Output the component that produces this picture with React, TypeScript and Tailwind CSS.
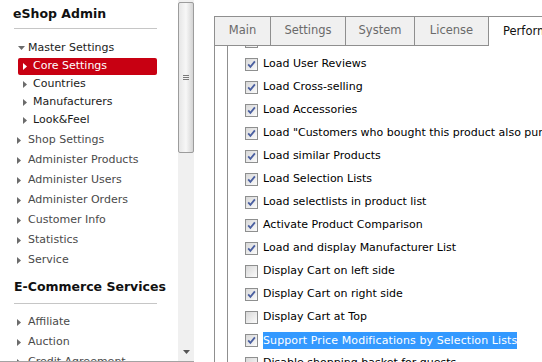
import React from 'react'

const font = { fontFamily: '"DejaVu Sans", Verdana, sans-serif' }

function Arrow({ color = '#6b6b6b' }: { color?: string }) {
  return (
    <svg width="4" height="7" viewBox="0 0 4 7" className="shrink-0">
      <path d="M0 0 L4 3.5 L0 7 Z" fill={color} />
    </svg>
  )
}

function Check({ checked }: { checked: boolean }) {
  return (
    <svg width="13" height="13" viewBox="0 0 13 13" className="shrink-0">
      <defs>
        <linearGradient id="cbg" x1="0" y1="0" x2="1" y2="1">
          <stop offset="0" stopColor="#d6d6d6" />
          <stop offset="1" stopColor="#fdfdfd" />
        </linearGradient>
      </defs>
      <rect x="0.5" y="0.5" width="12" height="12" fill="url(#cbg)" stroke="#8e8f8f" />
      {checked && (
        <path d="M3.2 6.3 L5.4 8.8 L9.9 3.4" fill="none" stroke="#4a5fa0" strokeWidth="1.8" />
      )}
    </svg>
  )
}

const topItems = [
  'Shop Settings',
  'Administer Products',
  'Administer Users',
  'Administer Orders',
  'Customer Info',
  'Statistics',
  'Service',
]

const options: [string, boolean][] = [
  ['Load Product Reviews', true],
  ['Load User Reviews', true],
  ['Load Cross-selling', true],
  ['Load Accessories', true],
  ['Load "Customers who bought this product also purchased"', true],
  ['Load similar Products', true],
  ['Load Selection Lists', true],
  ['Load selectlists in product list', true],
  ['Activate Product Comparison', true],
  ['Load and display Manufacturer List', true],
  ['Display Cart on left side', false],
  ['Display Cart on right side', true],
  ['Display Cart at Top', false],
  ['Support Price Modifications by Selection Lists', true],
  ['Disable shopping basket for guests', false],
]

function Sidebar() {
  return (
    <div className="w-[178px] h-[361px] overflow-hidden text-[11px]">
      <div className="h-[28px] flex items-center pl-[13px] text-[12.5px] font-bold text-[#111]">eShop Admin</div>
      <div className="ml-[14px] w-[143px] h-px bg-[#c6c6c6]" />

      <div className="mt-[10px] h-[18px] flex items-center pl-[18px] text-[#222]">
        <svg width="7" height="4" viewBox="0 0 7 4" className="shrink-0">
          <path d="M0 0 L7 0 L3.5 4 Z" fill="#6b6b6b" />
        </svg>
        <span className="ml-[3px]">Master Settings</span>
      </div>
      <div className="mt-px ml-[18px] w-[139px] h-[17px] rounded-[2px] bg-[#c80012] flex items-center pl-[5px] text-white">
        <Arrow color="#ffffff" />
        <span className="ml-[6px]">Core Settings</span>
      </div>
      {['Countries', 'Manufacturers', 'Look&Feel'].map((t) => (
        <div key={t} className="h-[18px] flex items-center pl-[23px] text-[#1a1a1a]">
          <Arrow />
          <span className="ml-[6px]">{t}</span>
        </div>
      ))}

      <div className="h-px" />
      {topItems.map((t) => (
        <div key={t} className="h-[20px] flex items-center pl-[17px] text-[#4a4a4a]">
          <Arrow />
          <span className="ml-[7px]">{t}</span>
        </div>
      ))}

      <div className="mt-[7px] h-[20px] flex items-center pl-[14px] text-[12.5px] font-bold text-[#111]">
        E-Commerce Services
      </div>
      <div className="mt-[6px] ml-[14px] w-[143px] h-px bg-[#c6c6c6]" />
      <div className="h-[8px]" />
      {['Affiliate', 'Auction', 'Credit Agreement'].map((t) => (
        <div key={t} className="h-[20px] flex items-center pl-[17px] text-[#4a4a4a]">
          <Arrow />
          <span className="ml-[7px]">{t}</span>
        </div>
      ))}
    </div>
  )
}

function Scrollbar() {
  return (
    <div className="w-[16px] h-[361px] bg-[#f0f0f0] flex flex-col items-stretch">
      <div className="mt-[2px] h-[151px] shrink-0 border border-[#9c9c9c] rounded-[2px] bg-gradient-to-r from-[#e6e6e6] via-[#f7f7f7] to-[#d4d4d4] flex flex-col items-center justify-center">
        <div className="flex flex-col gap-[1px]">
          <div className="w-[6px] h-px bg-[#7a7a7a]" />
          <div className="w-[6px] h-px bg-[#7a7a7a]" />
          <div className="w-[6px] h-px bg-[#7a7a7a]" />
        </div>
      </div>
      <div className="flex-1" />
      <div className="h-[14px] flex items-center justify-center mb-[2px]">
        <svg width="7" height="4" viewBox="0 0 7 4">
          <path d="M0 0 L7 0 L3.5 4 Z" fill="#555" />
        </svg>
      </div>
    </div>
  )
}

const tabs: [string, string][] = [
  ['Main', 'w-[56px]'],
  ['Settings', 'w-[75px]'],
  ['System', 'w-[69px]'],
  ['License', 'w-[74px]'],
]

function Panel() {
  return (
    <div className="flex-1 pt-[16px] flex flex-col min-w-0">
      <div className="flex h-[30px] shrink-0">
        {tabs.map(([t, w]) => (
          <div
            key={t}
            className={`${w} shrink-0 h-[30px] border-l border-t border-b border-[#8f8f8f] bg-[#f0f0f0] flex items-center justify-center text-[11.5px] text-[#6a6a6a]`}
          >
            {t}
          </div>
        ))}
        <div className="flex-1 h-[30px] border-l border-t border-[#8f8f8f] bg-white flex items-center pl-[14px] text-[11.5px] text-[#111] whitespace-nowrap overflow-hidden">
          Performance
        </div>
      </div>
      <div className="flex-1 flex border-l border-[#8f8f8f] min-h-0">
        <div className="w-[12px] shrink-0" />
        <div className="flex-1 border-l border-[#8f8f8f] overflow-hidden pl-[17px]">
          <div className="-mt-[16px]">
            {options.map(([t, c], i) => (
              <div key={i} className="h-[23px] flex items-center whitespace-nowrap text-[11px] text-black">
                <Check checked={c} />
                {i === 0 ? null : i === 13 ? (
                  <span className="ml-[5px] bg-[#3399ff] text-white leading-[17px] tracking-[0.1px]">{t}</span>
                ) : (
                  <span className="ml-[5px]">{t}</span>
                )}
              </div>
            ))}
          </div>
        </div>
      </div>
    </div>
  )
}

export default function App() {
  return (
    <div className="w-[542px] h-[362px] overflow-hidden bg-white flex" style={font}>
      <div className="flex border-b border-[#a3a3a3] h-[362px] shrink-0">
        <Sidebar />
        <Scrollbar />
      </div>
      <div className="w-[20px] shrink-0" />
      <Panel />
    </div>
  )
}
